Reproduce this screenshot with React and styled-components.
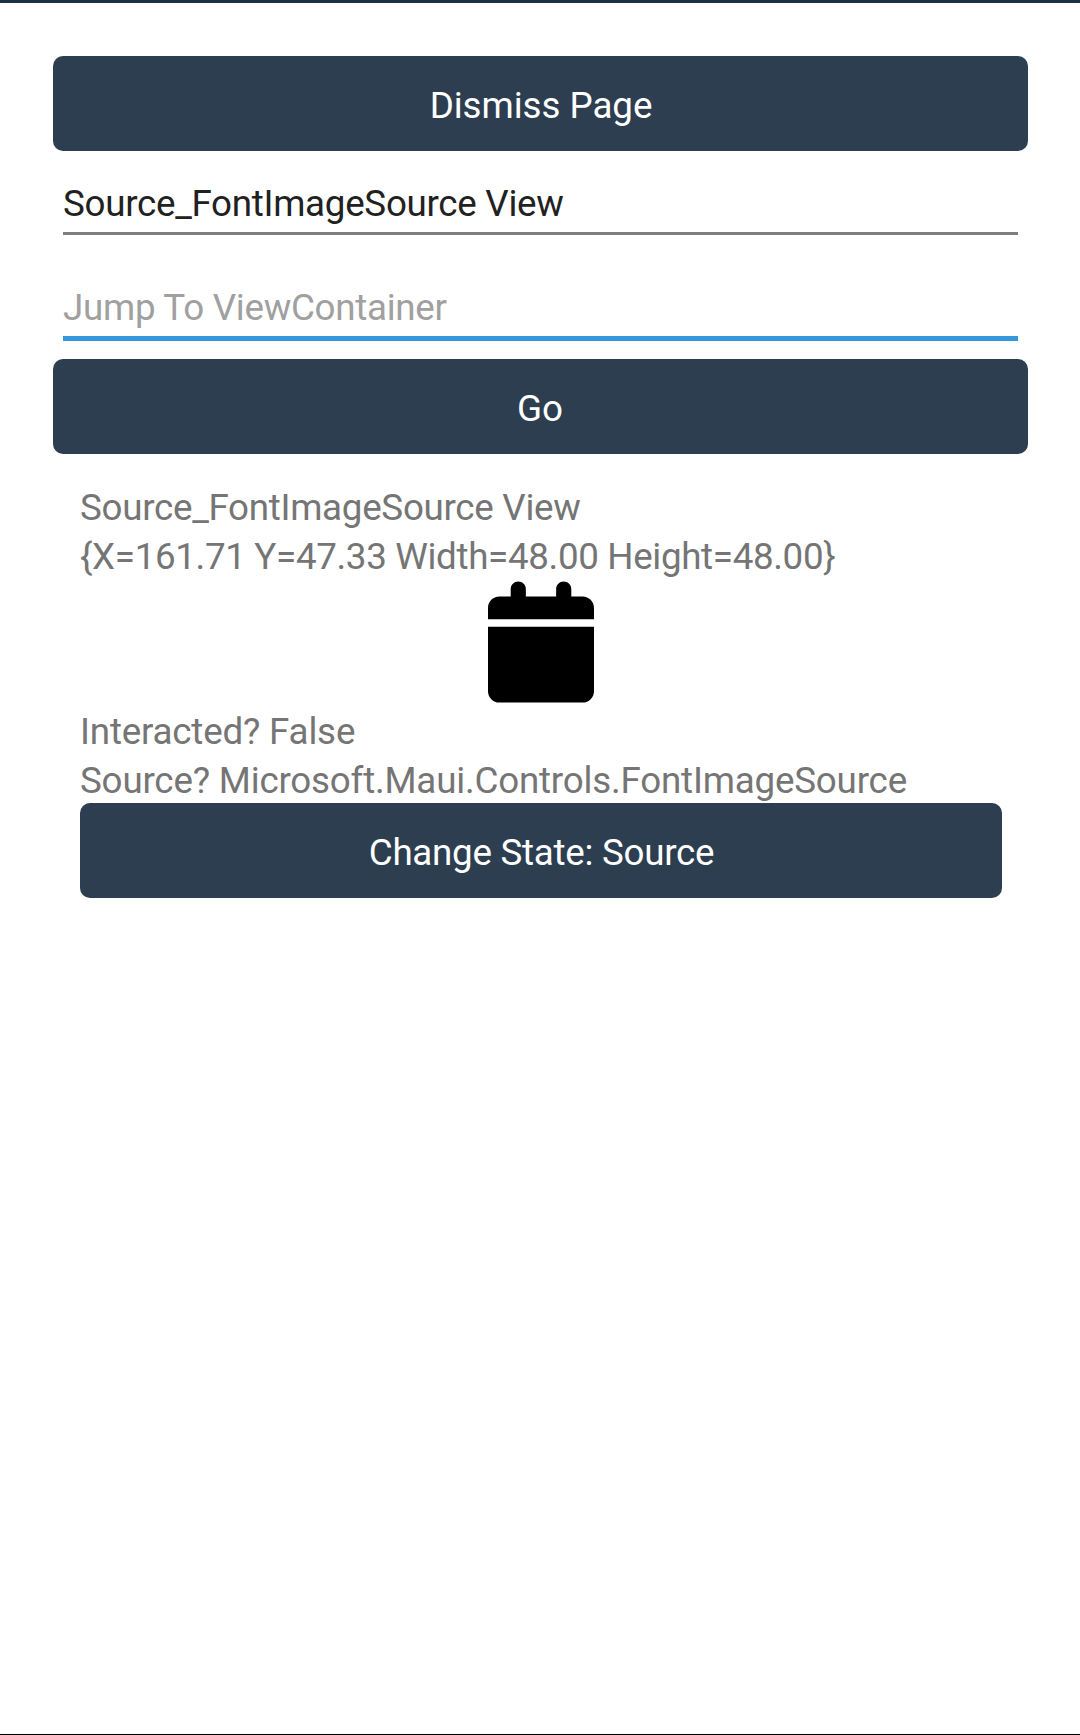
import React from "react";
import styled, { createGlobalStyle } from "styled-components";

const Global = createGlobalStyle`
  * { box-sizing: border-box; }
  body { margin: 0; background: #fff; }
`;
const Page = styled.main`
  display: flex;
  flex-direction: column;
  height: 1735px;
  padding: 53px 52px 0 53px;
  border-top: 3px solid #1b3147;
  border-bottom: 1px solid #000;
  font-family: Roboto, sans-serif;
  font-size: 36.75px;
`;
const Button = styled.button`
  flex: none;
  height: 95px;
  padding: ${(p) => (p.$short ? "4px 1px 0 0" : "4px 0 0 1px")};
  border: 0;
  border-radius: 10px;
  background: #2c3e50;
  color: #fff;
  font: inherit;
  letter-spacing: ${(p) => p.$spacing || 0}px;
`;
const Field = styled.input`
  flex: none;
  height: ${(p) => (p.$active ? 68 : 63)}px;
  margin: ${(p) => p.$margin};
  padding: ${(p) => (p.$active ? 6 : 2)}px 0 0;
  border: 0;
  border-bottom: ${(p) => (p.$active ? "5px solid #3498db" : "3px solid #7f7f7f")};
  border-radius: 0;
  outline: 0;
  background: transparent;
  color: #212121;
  font: inherit;
  letter-spacing: -0.29px;
  &::placeholder { color: #a0a0a0; opacity: 1; }
`;
const Panel = styled.section`
  display: flex;
  flex-direction: column;
  padding: 29px 26px 0 27px;
`;
const Label = styled.div`
  height: ${(p) => (p.$tight ? 47 : 49)}px;
  line-height: 49px;
  color: #757575;
  letter-spacing: ${(p) => p.$spacing}px;
  white-space: nowrap;
`;
const Calendar = styled.svg`
  display: block;
  width: 106px;
  height: 122px;
  margin: 0 auto 4px;
`;

export default function App() {
  return (
    <Page>
      <Global />
      <Button $spacing={-0.05}>Dismiss Page</Button>
      <Field $margin="21px 10px 0" defaultValue="Source_FontImageSource View" />
      <Field $active $margin="38px 10px 18px" placeholder="Jump To ViewContainer" />
      <Button $short>Go</Button>
      <Panel>
        <Label $spacing={-0.29}>Source_FontImageSource View</Label>
        <Label $spacing={-0.34}>{"{X=161.71 Y=47.33 Width=48.00 Height=48.00}"}</Label>
        <Calendar viewBox="0 0 448 512">
          <path d="M96 32V64H48C21.500 64 0 85.500 0 112v48H448V112c0-26.500-21.500-48-48-48H352V32c0-17.700-14.300-32-32-32s-32 14.300-32 32V64H160V32c0-17.700-14.300-32-32-32S96 14.300 96 32zM448 192H0V464c0 26.500 21.500 48 48 48H400c26.500 0 48-21.500 48-48V192z" />
        </Calendar>
        <Label $spacing={-0.2}>Interacted? False</Label>
        <Label $tight $spacing={-0.2}>Source? Microsoft.Maui.Controls.FontImageSource</Label>
        <Button $spacing={-0.27}>Change State: Source</Button>
      </Panel>
    </Page>
  );
}
